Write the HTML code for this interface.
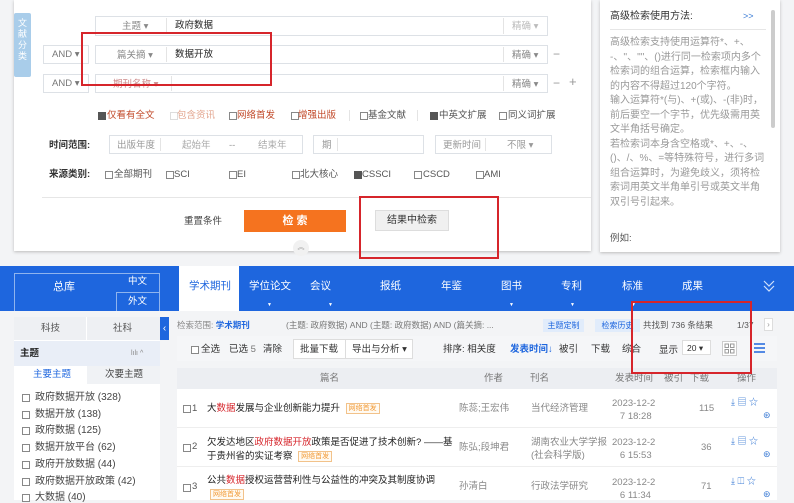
<!DOCTYPE html>
<html><head><meta charset="utf-8"><style>
*{margin:0;padding:0;box-sizing:border-box}
body{width:794px;height:500px;overflow:hidden;background:#f3f4f6;font-family:"Liberation Sans","Noto Sans CJK SC",sans-serif;font-size:9.5px;color:#555;position:relative}
.a{position:absolute;white-space:nowrap;line-height:1}
.box{position:absolute;border:1px solid #dde1e6;background:#fff}
.cb{position:absolute;width:8px;height:8px;border:1px solid #888;background:#fff}
.cbk{background:#555;border-color:#555}
.red{position:absolute;border:2px solid #d6252b}
.tab{position:absolute;top:281px;color:#fff;font-size:10.5px;line-height:1;white-space:nowrap}
.arr{position:absolute;top:302px;color:#fff;font-size:5px}
.hl{color:#d6252b}
.tag{display:inline-block;border:1px solid #f2c28a;color:#f29b38;font-size:7px;padding:1px 2px;background:#fffaf2;line-height:1;vertical-align:1px}
.ic{position:absolute;color:#3a7bd5;font-size:9px;line-height:1}
.vd{position:absolute;width:1px;background:#e4e4e4}
</style></head><body>
<!-- top panel -->
<div class="a" style="left:14px;top:0;width:577px;height:251px;background:#fff;box-shadow:0 1px 3px #bbb"></div>
<div class="a" style="left:14px;top:13px;width:17px;height:64px;background:#a9cdea;color:#fff;font-size:9px;line-height:11px;text-align:center;white-space:normal;padding-top:5px;border-radius:2px">文<br>献<br>分<br>类</div>

<div class="box" style="left:95px;top:16px;width:453px;height:20px"></div>
<div class="vd" style="left:166px;top:18px;height:16px"></div>
<div class="a" style="left:122px;top:22px;color:#888">主题 ▾</div>
<div class="a" style="left:175px;top:21px;color:#222">政府数据</div>
<div class="vd" style="left:503px;top:18px;height:16px"></div>
<div class="a" style="left:512px;top:22px;color:#bbb">精确 ▾</div>

<div class="box" style="left:43px;top:45px;width:46px;height:19px"></div><div class="a" style="left:52px;top:50px;color:#777">AND ▾</div>
<div class="box" style="left:95px;top:45px;width:453px;height:19px"></div>
<div class="vd" style="left:166px;top:47px;height:15px"></div>
<div class="a" style="left:117px;top:51px;color:#888">篇关摘 ▾</div>
<div class="a" style="left:175px;top:50px;color:#222">数据开放</div>
<div class="vd" style="left:503px;top:47px;height:15px"></div>
<div class="a" style="left:512px;top:51px;color:#888">精确 ▾</div>
<div class="a" style="left:553px;top:48px;color:#999;font-size:12px">−</div>

<div class="box" style="left:43px;top:74px;width:46px;height:19px"></div><div class="a" style="left:52px;top:79px;color:#777">AND ▾</div>
<div class="box" style="left:95px;top:74px;width:453px;height:19px"></div>
<div class="a" style="left:113px;top:80px;color:#c88">期刊名称 ▾</div>
<div class="vd" style="left:171px;top:76px;height:15px"></div>
<div class="vd" style="left:503px;top:76px;height:15px"></div>
<div class="a" style="left:512px;top:80px;color:#888">精确 ▾</div>
<div class="a" style="left:553px;top:77px;color:#999;font-size:12px">−</div>
<div class="a" style="left:569px;top:75px;color:#999;font-size:13px">+</div>

<div class="cb cbk" style="left:98px;top:112px"></div><div class="a" style="left:107px;top:111px;color:#c24a2a">仅看有全文</div>
<div class="cb" style="left:170px;top:112px;border-color:#ddd"></div><div class="a" style="left:177px;top:111px;color:#e3a58e">包含资讯</div>
<div class="cb" style="left:229px;top:112px"></div><div class="a" style="left:237px;top:111px;color:#c24a2a">网络首发</div>
<div class="cb" style="left:291px;top:112px"></div><div class="a" style="left:298px;top:111px;color:#c24a2a">增强出版</div>
<div class="vd" style="left:349px;top:110px;height:11px"></div>
<div class="cb" style="left:360px;top:112px"></div><div class="a" style="left:368px;top:111px">基金文献</div>
<div class="vd" style="left:417px;top:110px;height:11px"></div>
<div class="cb cbk" style="left:430px;top:112px"></div><div class="a" style="left:439px;top:111px">中英文扩展</div>
<div class="cb" style="left:499px;top:112px"></div><div class="a" style="left:508px;top:111px">同义词扩展</div>

<div class="a" style="left:49px;top:141px;color:#333;font-weight:bold">时间范围:</div>
<div class="box" style="left:109px;top:135px;width:194px;height:19px"></div>
<div class="a" style="left:117px;top:141px;color:#999">出版年度</div><div class="vd" style="left:160px;top:138px;height:13px"></div>
<div class="a" style="left:182px;top:141px;color:#aaa">起始年</div><div class="a" style="left:229px;top:141px;color:#999">--</div><div class="a" style="left:258px;top:141px;color:#aaa">结束年</div>
<div class="box" style="left:313px;top:135px;width:111px;height:19px"></div><div class="a" style="left:322px;top:141px;color:#999">期</div><div class="vd" style="left:337px;top:138px;height:13px"></div>
<div class="box" style="left:435px;top:135px;width:117px;height:19px"></div><div class="a" style="left:443px;top:141px;color:#999">更新时间</div><div class="vd" style="left:485px;top:138px;height:13px"></div><div class="a" style="left:507px;top:141px;color:#999">不限 ▾</div>

<div class="a" style="left:49px;top:170px;color:#333;font-weight:bold">来源类别:</div>
<div class="cb" style="left:105px;top:171px"></div><div class="a" style="left:114px;top:170px">全部期刊</div>
<div class="cb" style="left:166px;top:171px"></div><div class="a" style="left:174px;top:170px">SCI</div>
<div class="cb" style="left:229px;top:171px"></div><div class="a" style="left:237px;top:170px">EI</div>
<div class="cb" style="left:292px;top:171px"></div><div class="a" style="left:300px;top:170px">北大核心</div>
<div class="cb cbk" style="left:354px;top:171px"></div><div class="a" style="left:362px;top:170px">CSSCI</div>
<div class="cb" style="left:414px;top:171px"></div><div class="a" style="left:423px;top:170px">CSCD</div>
<div class="cb" style="left:476px;top:171px"></div><div class="a" style="left:484px;top:170px">AMI</div>
<div class="a" style="left:42px;top:197px;width:549px;height:1px;background:#e6e6e6"></div>
<div class="a" style="left:184px;top:217px;color:#444">重置条件</div>
<div class="a" style="left:244px;top:210px;width:102px;height:22px;background:#f5731f;color:#fff;font-size:11px;text-align:center;line-height:22px;font-weight:bold">检 索</div>
<div class="a" style="left:375px;top:210px;width:74px;height:21px;background:#f0f0f0;border:1px solid #ddd;color:#333;font-size:10px;text-align:center;line-height:19px">结果中检索</div>
<div class="a" style="left:293px;top:240px;width:16px;height:16px;border-radius:8px;background:#f1f1f1;color:#999;font-size:7px;text-align:center;line-height:16px">︽</div>
<div class="red" style="left:81px;top:32px;width:191px;height:54px"></div>
<div class="red" style="left:359px;top:196px;width:140px;height:63px"></div>

<!-- right panel -->
<div class="a" style="left:600px;top:0;width:180px;height:252px;background:#fff;box-shadow:0 1px 3px #bbb"></div>
<div class="a" style="left:610px;top:12px;color:#333;font-size:10px">高级检索使用方法:</div>
<div class="a" style="left:743px;top:12px;color:#3a7bd5;font-size:9px">&gt;&gt;</div>
<div class="a" style="left:610px;top:29px;width:156px;height:1px;background:#e6e6e6"></div>
<div class="a" style="left:610px;top:36px;width:158px;white-space:normal;color:#999;font-size:10px;line-height:14.5px;word-break:break-all">高级检索支持使用运算符*、+、-、''、""、()进行同一检索项内多个检索词的组合运算，检索框内输入的内容不得超过120个字符。<br>输入运算符*(与)、+(或)、-(非)时，前后要空一个字节，优先级需用英文半角括号确定。<br>若检索词本身含空格或*、+、-、()、/、%、=等特殊符号，进行多词组合运算时，为避免歧义，须将检索词用英文半角单引号或英文半角双引号引起来。</div>
<div class="a" style="left:610px;top:234px;color:#555;font-size:9.5px">例如:</div>
<div class="a" style="left:771px;top:10px;width:4px;height:118px;background:#ccc;border-radius:2px"></div>

<!-- blue band -->
<div class="a" style="left:0;top:266px;width:794px;height:45px;background:#1e66de"></div>
<div class="a" style="left:14px;top:273px;width:146px;height:38px;border:1px solid #8fb4ee;border-bottom:none"></div>
<div class="a" style="left:116px;top:292px;width:44px;height:19px;border:1px solid #8fb4ee;border-bottom:none"></div>
<div class="tab" style="left:53px;top:282px;font-size:11px">总库</div>
<div class="tab" style="left:128px;top:277px;font-size:9.5px">中文</div>
<div class="tab" style="left:128px;top:297px;font-size:9.5px">外文</div>
<div class="a" style="left:179px;top:266px;width:60px;height:45px;background:#fff"></div>
<div class="tab" style="left:189px;color:#1e66de">学术期刊</div>
<div class="tab" style="left:249px">学位论文</div><div class="arr" style="left:267px">▼</div>
<div class="tab" style="left:310px">会议</div><div class="arr" style="left:328px">▼</div>
<div class="tab" style="left:380px">报纸</div>
<div class="tab" style="left:441px">年鉴</div>
<div class="tab" style="left:501px">图书</div><div class="arr" style="left:509px">▼</div>
<div class="tab" style="left:561px">专利</div><div class="arr" style="left:570px">▼</div>
<div class="tab" style="left:622px">标准</div><div class="arr" style="left:631px">▼</div>
<div class="tab" style="left:682px">成果</div>
<svg class="a" style="left:763px;top:279px" width="12" height="14" viewBox="0 0 12 14"><path d="M1 2l5 5 5-5M1 7l5 5 5-5" fill="none" stroke="#cfe0fb" stroke-width="1.2"/></svg>

<!-- sidebar -->
<div class="a" style="left:14px;top:317px;width:146px;height:183px;background:#fff"></div>
<div class="a" style="left:14px;top:317px;width:72px;height:23px;background:#eef0f3"></div>
<div class="a" style="left:87px;top:317px;width:73px;height:23px;background:#eef0f3"></div>
<div class="a" style="left:41px;top:324px;color:#555;font-size:9.5px">科技</div>
<div class="a" style="left:113px;top:324px;color:#555;font-size:9.5px">社科</div>
<div class="a" style="left:160px;top:317px;width:9px;height:23px;background:#1e66de;color:#fff;font-size:10px;text-align:center;line-height:23px">‹</div>
<div class="a" style="left:14px;top:341px;width:146px;height:25px;background:#e9eef7"></div>
<div class="a" style="left:20px;top:349px;color:#222;font-weight:bold;font-size:9.5px">主题</div>
<div class="a" style="left:131px;top:350px;color:#888;font-size:7px">lılı ^</div>
<div class="a" style="left:87px;top:366px;width:73px;height:18px;background:#f0f2f5"></div>
<div class="a" style="left:33px;top:370px;color:#1e66de">主要主题</div>
<div class="a" style="left:105px;top:370px;color:#444">次要主题</div>
<div class="cb" style="left:22px;top:394px"></div><div class="a" style="left:35px;top:393px;font-size:10px;color:#444">政府数据开放 (328)</div>
<div class="cb" style="left:22px;top:411px"></div><div class="a" style="left:35px;top:410px;font-size:10px;color:#444">数据开放 (138)</div>
<div class="cb" style="left:22px;top:427px"></div><div class="a" style="left:35px;top:426px;font-size:10px;color:#444">政府数据 (125)</div>
<div class="cb" style="left:22px;top:444px"></div><div class="a" style="left:35px;top:443px;font-size:10px;color:#444">数据开放平台 (62)</div>
<div class="cb" style="left:22px;top:461px"></div><div class="a" style="left:35px;top:460px;font-size:10px;color:#444">政府开放数据 (44)</div>
<div class="cb" style="left:22px;top:478px"></div><div class="a" style="left:35px;top:477px;font-size:10px;color:#444">政府数据开放政策 (42)</div>
<div class="cb" style="left:22px;top:494px"></div><div class="a" style="left:35px;top:493px;font-size:10px;color:#444">大数据 (40)</div>

<!-- main -->
<div class="a" style="left:177px;top:321px;color:#888;font-size:8.5px">检索范围: <b style="color:#1e66de">学术期刊</b></div>
<div class="a" style="left:286px;top:321px;color:#777;font-size:8.5px">(主题: 政府数据) AND (主题: 政府数据) AND (篇关摘: ...</div>
<div class="a" style="left:543px;top:319px;width:41px;height:13px;background:#e1ecfb;color:#1e66de;font-size:8px;text-align:center;line-height:13px">主题定制</div>
<div class="a" style="left:595px;top:319px;width:45px;height:13px;background:#e1ecfb;color:#1e66de;font-size:8px;text-align:center;line-height:13px">检索历史</div>
<div class="a" style="left:643px;top:321px;color:#555;font-size:8.5px">共找到 <span style="color:#555">736</span> 条结果</div>
<div class="a" style="left:737px;top:321px;color:#555;font-size:8.5px">1/37</div>
<div class="a" style="left:764px;top:318px;width:9px;height:13px;border:1px solid #ddd;background:#fff;color:#999;font-size:8px;text-align:center;line-height:11px">›</div>

<div class="a" style="left:177px;top:336px;width:600px;height:25px;background:#f5f6f8"></div>
<div class="cb" style="left:191px;top:346px"></div>
<div class="a" style="left:201px;top:345px;color:#333">全选</div>
<div class="a" style="left:229px;top:345px;color:#333">已选 <span style="color:#777">5</span></div>
<div class="a" style="left:263px;top:345px;color:#333">清除</div>
<div class="a" style="left:293px;top:339px;width:120px;height:20px;border:1px solid #ddd;background:#fff"></div>
<div class="vd" style="left:345px;top:339px;height:20px;background:#ddd"></div>
<div class="a" style="left:300px;top:345px;color:#333">批量下载</div>
<div class="a" style="left:352px;top:345px;color:#333">导出与分析 ▾</div>
<div class="a" style="left:443px;top:345px;color:#333">排序: 相关度</div>
<div class="a" style="left:510px;top:345px;color:#1e66de;font-weight:bold">发表时间↓</div>
<div class="a" style="left:559px;top:345px;color:#333">被引</div>
<div class="a" style="left:591px;top:345px;color:#333">下载</div>
<div class="a" style="left:622px;top:345px;color:#333">综合</div>
<div class="a" style="left:659px;top:346px;color:#333">显示</div>
<div class="a" style="left:682px;top:340px;width:29px;height:15px;border:1px solid #ddd;background:#fff;color:#333;font-size:8.5px;padding:3px 0 0 4px">20 ▾</div>
<div class="a" style="left:722px;top:341px;width:15px;height:15px;border:1px solid #ccc;background:#fff"></div>
<svg class="a" style="left:724px;top:343px" width="11" height="11"><rect x="1" y="1" width="3.5" height="3.5" fill="none" stroke="#999"/><rect x="6.5" y="1" width="3.5" height="3.5" fill="none" stroke="#999"/><rect x="1" y="6.5" width="3.5" height="3.5" fill="none" stroke="#999"/><rect x="6.5" y="6.5" width="3.5" height="3.5" fill="none" stroke="#999"/></svg>
<svg class="a" style="left:753px;top:342px" width="13" height="12"><path d="M1 2h11M1 6h11M1 10h11" stroke="#1e66de" stroke-width="1.5"/></svg>

<div class="a" style="left:177px;top:368px;width:600px;height:21px;background:#eceef2"></div>
<div class="a" style="left:320px;top:374px;color:#777">篇名</div>
<div class="a" style="left:484px;top:374px;color:#777">作者</div>
<div class="a" style="left:530px;top:374px;color:#777">刊名</div>
<div class="a" style="left:615px;top:374px;color:#777">发表时间</div>
<div class="a" style="left:664px;top:374px;color:#777">被引</div>
<div class="a" style="left:690px;top:374px;color:#777">下载</div>
<div class="a" style="left:737px;top:374px;color:#777">操作</div>

<div class="a" style="left:177px;top:389px;width:600px;height:111px;background:#fff"></div>
<div class="a" style="left:177px;top:427px;width:600px;height:1px;background:#eee"></div>
<div class="a" style="left:177px;top:466px;width:600px;height:1px;background:#eee"></div>

<div class="cb" style="left:183px;top:405px"></div><div class="a" style="left:192px;top:404px;color:#555">1</div>
<div class="a" style="left:207px;top:403px;color:#222">大<span class="hl">数据</span>发展与企业创新能力提升 <span class="tag" style="margin-left:3px">网络首发</span></div>
<div class="a" style="left:459px;top:404px;color:#888">陈蕊;王宏伟</div>
<div class="a" style="left:531px;top:404px;color:#888">当代经济管理</div>
<div class="a" style="left:612px;top:397px;color:#888;line-height:13px">2023-12-2<br>&nbsp;&nbsp;&nbsp;7 18:28</div>
<div class="a" style="left:699px;top:404px;color:#888">115</div>
<div class="ic" style="left:731px;top:398px">⤓ ▤ ☆</div><div class="ic" style="left:763px;top:411px">⊛</div>

<div class="cb" style="left:183px;top:444px"></div><div class="a" style="left:192px;top:442px;color:#555">2</div>
<div class="a" style="left:207px;top:436px;color:#222;line-height:14px">欠发达地区<span class="hl">政府数据开放</span>政策是否促进了技术创新? ——基<br>于贵州省的实证考察 <span class="tag" style="margin-left:3px">网络首发</span></div>
<div class="a" style="left:459px;top:443px;color:#888">陈弘;段坤君</div>
<div class="a" style="left:531px;top:436px;color:#888;line-height:13px">湖南农业大学学报<br>(社会科学版)</div>
<div class="a" style="left:612px;top:436px;color:#888;line-height:13px">2023-12-2<br>&nbsp;&nbsp;&nbsp;6 15:53</div>
<div class="a" style="left:701px;top:443px;color:#888">36</div>
<div class="ic" style="left:731px;top:437px">⤓ ▤ ☆</div><div class="ic" style="left:763px;top:450px">⊛</div>

<div class="cb" style="left:183px;top:484px"></div><div class="a" style="left:192px;top:482px;color:#555">3</div>
<div class="a" style="left:207px;top:476px;color:#222">公共<span class="hl">数据</span>授权运营营利性与公益性的冲突及其制度协调</div>
<div class="a" style="left:210px;top:489px"><span class="tag">网络首发</span></div>
<div class="a" style="left:459px;top:482px;color:#888">孙清白</div>
<div class="a" style="left:531px;top:482px;color:#888">行政法学研究</div>
<div class="a" style="left:612px;top:476px;color:#888;line-height:13px">2023-12-2<br>&nbsp;&nbsp;&nbsp;6 11:34</div>
<div class="a" style="left:701px;top:482px;color:#888">71</div>
<div class="ic" style="left:731px;top:477px">⤓ ◫ ☆</div><div class="ic" style="left:763px;top:490px">⊛</div>

<div class="red" style="left:631px;top:301px;width:121px;height:73px"></div>
</body></html>
